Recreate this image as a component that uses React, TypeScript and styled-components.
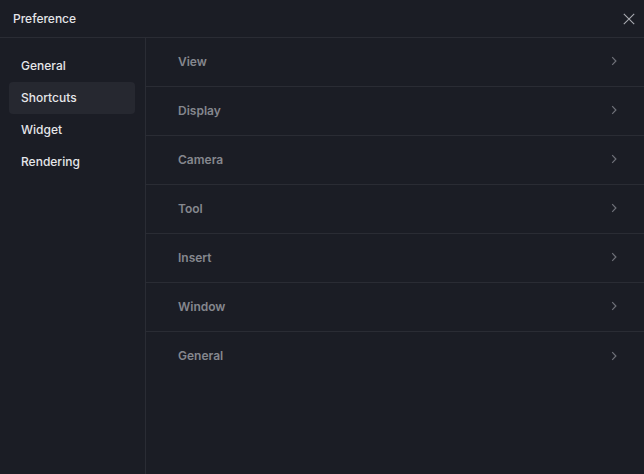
import styled, { createGlobalStyle } from 'styled-components';

const GlobalStyle = createGlobalStyle`
  html, body {
    margin: 0;
    padding: 0;
    background: #1b1d25;
  }
  body {
    font-family: Inter, "Noto Sans", sans-serif;
    -webkit-font-smoothing: antialiased;
  }
`;

const Dialog = styled.div`
  width: 644px;
  height: 474px;
  display: flex;
  flex-direction: column;
  background: #1b1d25;
  color: #e4e5e8;
  overflow: hidden;
`;

const Header = styled.div`
  height: 37px;
  flex: none;
  display: flex;
  align-items: center;
  justify-content: space-between;
  padding: 0 13px;
  border-bottom: 1px solid #2a2c34;
  font-size: 12px;
  font-weight: 500;
`;

const CloseButton = styled.button`
  width: 16px;
  height: 16px;
  padding: 0;
  margin-right: -6px;
  border: none;
  background: none;
  color: #a9abb1;
  display: flex;
  align-items: center;
  justify-content: center;
  cursor: pointer;
`;

const Body = styled.div`
  flex: 1;
  display: flex;
  min-height: 0;
`;

const Sidebar = styled.nav`
  width: 146px;
  flex: none;
  box-sizing: border-box;
  border-right: 1px solid #2a2c34;
  padding: 12px 10px 0 9px;
  display: flex;
  flex-direction: column;
`;

const NavItem = styled.div<{ $active?: boolean }>`
  height: 32px;
  box-sizing: border-box;
  display: flex;
  align-items: center;
  padding: 0 12px 2px;
  border-radius: 4px;
  font-size: 12px;
  font-weight: 500;
  color: #e6e7ea;
  background: ${(p) => (p.$active ? '#262830' : 'transparent')};
  cursor: pointer;
`;

const Panel = styled.div`
  flex: 1;
  display: flex;
  flex-direction: column;
`;

const Row = styled.div`
  height: 49px;
  flex: none;
  box-sizing: border-box;
  display: flex;
  align-items: center;
  justify-content: space-between;
  padding: 0 25px 2px 32px;
  border-bottom: 1px solid #2a2c34;
  font-size: 12px;
  font-weight: 600;
  color: #85878e;
  cursor: pointer;

  &:last-child {
    border-bottom: none;
  }
`;

const ChevronIcon = styled.svg`
  width: 10px;
  height: 10px;
  flex: none;
`;

const Chevron = () => (
  <ChevronIcon viewBox="0 0 10 10" fill="none">
    <path d="M3.2 1.2 6.9 5 3.2 8.8" stroke="#6f7179" strokeWidth="1.2" />
  </ChevronIcon>
);

const sections = ['General', 'Shortcuts', 'Widget', 'Rendering'];
const groups = ['View', 'Display', 'Camera', 'Tool', 'Insert', 'Window', 'General'];

export default function App() {
  return (
    <>
      <GlobalStyle />
      <Dialog>
        <Header>
          Preference
          <CloseButton aria-label="Close">
            <svg width="12" height="12" viewBox="0 0 12 12">
              <path d="M0.8 0.8l10.4 10.4M11.2 0.8 0.8 11.2" stroke="currentColor" strokeWidth="1.1" />
            </svg>
          </CloseButton>
        </Header>
        <Body>
          <Sidebar>
            {sections.map((s) => (
              <NavItem key={s} $active={s === 'Shortcuts'}>
                {s}
              </NavItem>
            ))}
          </Sidebar>
          <Panel>
            {groups.map((g, i) => (
              <Row key={g + i}>
                <span>{g}</span>
                <Chevron />
              </Row>
            ))}
          </Panel>
        </Body>
      </Dialog>
    </>
  );
}
